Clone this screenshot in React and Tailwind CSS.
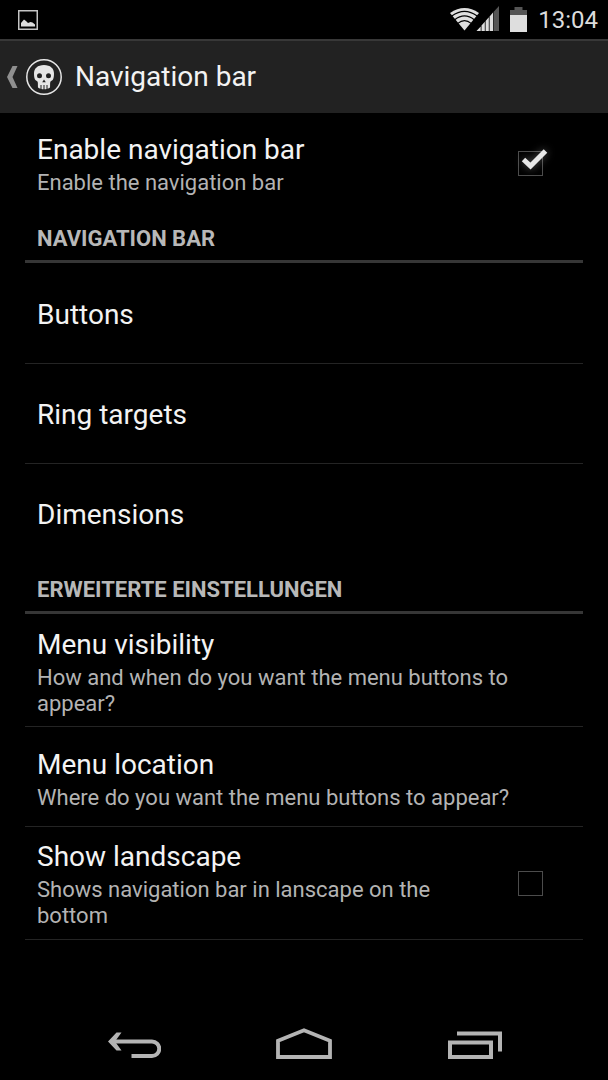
import { useState } from 'react';

const NAVIGATION_ITEMS = [
  { id: 'buttons', title: 'Buttons', divider: true },
  { id: 'ring', title: 'Ring targets', divider: true },
  { id: 'dimensions', title: 'Dimensions' },
];

const ADVANCED_ITEMS = [
  {
    id: 'visibility',
    title: 'Menu visibility',
    summary: 'How and when do you want the menu buttons to appear?',
    divider: true,
  },
  {
    id: 'location',
    title: 'Menu location',
    summary: 'Where do you want the menu buttons to appear?',
    divider: true,
  },
];

// ─── Status bar icons ─────────────────────────────────────
const PictureIcon = () => (
  <svg width="20" height="20" viewBox="0 0 20 20" fill="none">
    <rect x="0.75" y="0.75" width="18.5" height="18.5" stroke="#c4c4c4" strokeWidth="1.5" />
    <path d="M3 16.500V13L6 9.500l2 1.500 2 2 2.500-1 2 .5 2.500 2v2z" fill="#dcdcdc" />
  </svg>
);

// Wifi fan with the mobile signal wedge tucked in beside it
const NetworkIcon = () => (
  <svg width="49" height="27" viewBox="0 0 49 27" fill="none">
    <path d="M0 7Q14.500-3 29 7L14.500 24.500z" fill="#dedede" />
    <path
      d="M1.800 10.100Q14.500.5 27.200 10.100M4.700 13.800Q14.500 6 24.300 13.800M7.800 17.400Q14.500 12 21.200 17.400"
      stroke="#000"
      strokeWidth="1.2"
    />
    <path d="M43.500 6L49 0v25h-5.500z" fill="#555" />
    <path
      d="M26.500 25l4.200-4.600V25zM31.500 19.500l3.300-3.700V25h-3.300zM35.600 14.900l3.200-3.600V25h-3.200zM39.600 10.400L43 6.600V25h-3.400z"
      fill="#dedede"
    />
  </svg>
);

const BatteryIcon = () => (
  <svg width="17" height="25" viewBox="0 0 17 25">
    <path d="M4.500 0h8v3H17v5H0V3h4.500z" fill="#555" />
    <path d="M0 8h17v17H0z" fill="#dedede" />
  </svg>
);

// ─── Action bar icons ─────────────────────────────────────
const UpIcon = () => (
  <svg width="11" height="22" viewBox="0 0 11 22">
    <path d="M5.500 0H10.500L5.500 11l5 11H5.500L0 11z" fill="#8f8f8f" />
  </svg>
);

const SkullIcon = () => (
  <svg width="36" height="36" viewBox="0 0 36 36" fill="none">
    <circle cx="18" cy="18" r="17.200" stroke="#e6e6e6" strokeWidth="1.500" />
    <path
      d="M18 6C11.500 6 8 9.500 8 14.500c0 2.500.3 4.500 1 6 .7 1.200 2.300 1.400 2.700 2.400.4 1.400.1 4 .3 5.600.6.6 1.500 1 2.500 1.300V26h1v4.100c.6.1 1.200.2 2 .2V26h1v4.300c.8 0 1.400-.1 2-.2V26h1v3.800c1-.3 1.900-.7 2.500-1.300.2-1.600-.1-4.200.3-5.600.4-1 2-1.200 2.700-2.400.7-1.500 1-3.500 1-6C28 9.500 24.500 6 18 6z"
      fill="#e6e6e6"
    />
    <circle cx="13.500" cy="16.700" r="2.500" fill="#222" />
    <circle cx="22.500" cy="16.700" r="2.500" fill="#222" />
    <path d="M18 20.500l1.800 2.800h-3.600z" fill="#222" />
  </svg>
);

// ─── System navigation icons ──────────────────────────────
const BackIcon = () => (
  <svg width="54" height="32" viewBox="0 0 54 32" fill="none">
    <path d="M5 13.500H45a7.250 7.250 0 0 1 0 14.500H24.500" stroke="#b4b4b4" strokeWidth="4" />
    <path d="M1 13.500L9.500 4.500h5L8 13.500l6.500 9h-5z" fill="#b4b4b4" />
  </svg>
);

const HomeIcon = () => (
  <svg width="56" height="32" viewBox="0 0 56 32" fill="none">
    <path d="M2 29V12.700L28 2.200l26 10.500V29z" stroke="#b4b4b4" strokeWidth="3.800" />
  </svg>
);

const RecentsIcon = () => (
  <svg width="56" height="32" viewBox="0 0 56 32" fill="none">
    <path d="M4 14.500h41v14.500H4z" stroke="#b4b4b4" strokeWidth="4" />
    <path d="M11 5.500h43v18" stroke="#b4b4b4" strokeWidth="4" />
  </svg>
);

const SYSTEM_BUTTONS = [
  { id: 'back', label: 'Back', icon: BackIcon },
  { id: 'home', label: 'Home', icon: HomeIcon },
  { id: 'recents', label: 'Recent apps', icon: RecentsIcon },
];

// ─── Preference rows ──────────────────────────────────────
const PreferenceText = ({ title, summary }) => (
  <span className="block flex-1">
    <span className="block text-[28px] leading-10 text-[#f3f3f3]">{title}</span>
    {summary && <span className="block text-[22px] leading-[26px] text-[#b3b3b3]">{summary}</span>}
  </span>
);

const Preference = ({ title, summary, divider }) => (
  <button
    type="button"
    className={`flex w-full min-h-25 items-center px-3 pt-[11px] pb-[9px] text-left ${divider ? 'border-b border-[#242424]' : ''}`}
  >
    <PreferenceText title={title} summary={summary} />
  </button>
);

const CheckPreference = ({ title, summary, divider, defaultChecked = false }) => {
  const [checked, setChecked] = useState(defaultChecked);

  return (
    <label className={`flex min-h-25 items-center pl-3 pr-10 py-[10px] ${divider ? 'border-b border-[#242424]' : ''}`}>
      <PreferenceText title={title} summary={summary} />
      <span className="relative ml-6 block size-[25px] shrink-0">
        <input
          type="checkbox"
          checked={checked}
          onChange={e => setChecked(e.target.checked)}
          className="block size-[25px] appearance-none border border-[#4c4c4c] bg-black"
        />
        {checked && (
          <svg
            className="pointer-events-none absolute -left-2 -top-3 drop-shadow-[0_0_4px_rgba(255,255,255,0.35)]"
            width="44"
            height="42"
            viewBox="0 0 44 42"
            fill="none"
          >
            <path d="M13.500 20.500l7 6.500L35.500 12" stroke="#e8e8e8" strokeWidth="5" />
          </svg>
        )}
      </span>
    </label>
  );
};

const CategoryHeader = ({ children }) => (
  <h2 className="flex h-[50px] items-center border-b-3 border-[#363636] px-3 pt-1 text-[22px] font-bold uppercase text-[#b8b8b8]">
    {children}
  </h2>
);

const App = () => (
  <div className="flex min-h-screen flex-col bg-black font-[Roboto,'Noto_Sans',sans-serif] text-white">
    <div className="flex h-[39px] items-center justify-between pl-[18px] pr-[10px]">
      <PictureIcon />
      <div className="flex items-center gap-[11px]">
        <NetworkIcon />
        <BatteryIcon />
        <span className="text-[24px] text-[#dcdcdc]">13:04</span>
      </div>
    </div>

    <header className="flex h-[74px] items-center border-t-2 border-[#383838] bg-[#222] pl-[7px]">
      <button type="button" aria-label="Navigate up" className="flex items-center gap-2">
        <UpIcon />
        <SkullIcon />
      </button>
      <h1 className="ml-[13px] text-[28px] text-[#f3f3f3]">Navigation bar</h1>
    </header>

    <main className="flex-1 px-[25px]">
      <CheckPreference title="Enable navigation bar" summary="Enable the navigation bar" defaultChecked />

      <CategoryHeader>Navigation bar</CategoryHeader>
      <div className="pt-px">
        {NAVIGATION_ITEMS.map(item => (
          <Preference key={item.id} title={item.title} divider={item.divider} />
        ))}
      </div>

      <CategoryHeader>Erweiterte Einstellungen</CategoryHeader>
      {ADVANCED_ITEMS.map(item => (
        <Preference key={item.id} title={item.title} summary={item.summary} divider={item.divider} />
      ))}
      <CheckPreference title="Show landscape" summary="Shows navigation bar in lanscape on the bottom" divider />
    </main>

    <nav className="flex h-18 items-center justify-center">
      {SYSTEM_BUTTONS.map(({ id, label, icon: Icon }) => (
        <button key={id} type="button" aria-label={label} className="flex h-full w-[28%] items-center justify-center">
          <Icon />
        </button>
      ))}
    </nav>
  </div>
);

export default App;
